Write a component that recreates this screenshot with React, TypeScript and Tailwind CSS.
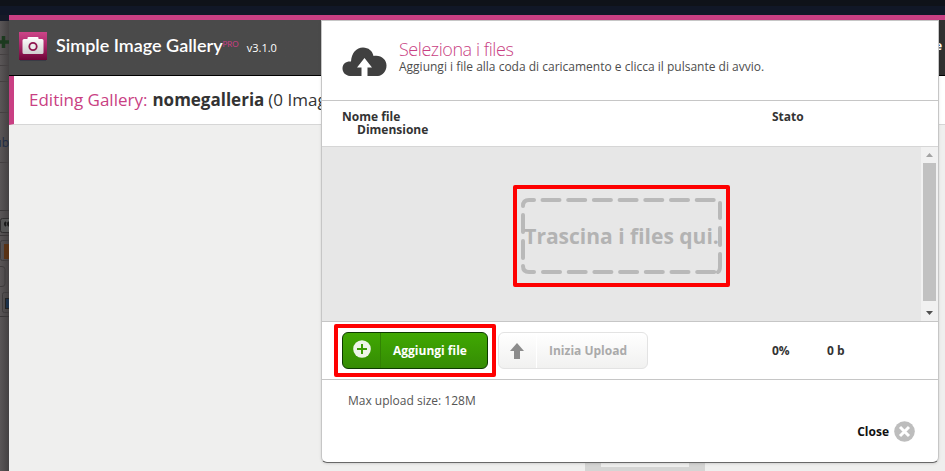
import type { ReactNode } from "react";

const LogoIcon = () => (
  <svg className="h-[30px] w-7 shrink-0" viewBox="0 0 28 30" aria-hidden="true">
    <defs>
      <linearGradient id="logo-bg" x1="0" y1="0" x2="0" y2="1">
        <stop offset="0" stopColor="#cc4588" />
        <stop offset="0.5" stopColor="#a82567" />
        <stop offset="1" stopColor="#6e0537" />
      </linearGradient>
      <linearGradient id="logo-camera" x1="0" y1="0" x2="0" y2="1">
        <stop offset="0" stopColor="#ffffff" />
        <stop offset="1" stopColor="#cfcfcf" />
      </linearGradient>
    </defs>
    <path d="M1 28.500h26" stroke="#393b45" />
    <rect width="28" height="28" fill="url(#logo-bg)" />
    <path
      d="M5 7h3.500V6a1 1 0 0 1 1-1h9a1 1 0 0 1 1 1v1H23a1.500 1.500 0 0 1 1.500 1.500V20.500A1.500 1.500 0 0 1 23 22H5a1.500 1.500 0 0 1-1.500-1.500V8.500A1.500 1.500 0 0 1 5 7z"
      fill="url(#logo-camera)"
    />
    <circle cx="14" cy="14.500" r="3.700" fill="#ececec" stroke="#8f1650" strokeWidth="1.800" />
  </svg>
);

const CloudUploadIcon = () => (
  <svg className="h-[29px] w-[45px] shrink-0" viewBox="0 0 45 29" aria-hidden="true">
    <path
      d="M8 29C3 28.500 0.500 25 0.500 21.500c0-5 4-7.500 8.500-7C9.500 6 14.500 0.500 21 0.500c5.500 0 9.500 3.500 10.500 8.500C39 7.500 44.500 12.500 44.500 18.500c0 6-4 10-8.500 10.500H25.500V20.500H30L22.500 11 15 20.500h4.500V29z"
      fill="#404040"
    />
  </svg>
);

const PlusIcon = () => (
  <svg className="size-[18px]" viewBox="0 0 18 18" aria-hidden="true">
    <circle cx="9" cy="9" r="8.800" fill="#eef5ea" />
    <path d="M9 4v10M4 9h10" stroke="#3c9d05" strokeWidth="2" />
  </svg>
);

const ArrowUpIcon = () => (
  <svg className="h-4 w-[14px]" viewBox="0 0 14 16" aria-hidden="true">
    <path d="M7 0l7 8h-4v8H4V8H0z" fill="#8c8c8c" />
  </svg>
);

const CloseIcon = () => (
  <svg className="size-[21px]" viewBox="0 0 21 21" aria-hidden="true">
    <circle cx="10.500" cy="10.500" r="10.300" fill="#bdbdbd" />
    <path d="M6 6l9 9M15 6l-9 9" stroke="#fff" strokeWidth="3" />
  </svg>
);

// Red frame used to point at a part of the dialog
const Highlight = ({ inset, children }: { inset: string; children: ReactNode }) => (
  <div className="relative">
    {children}
    <div className={`pointer-events-none absolute rounded-xs border-4 border-[#fe0000] ${inset}`} />
  </div>
);

const DimmedPage = () => (
  <div className="w-[9px] shrink-0 overflow-hidden bg-linear-to-r from-[#5a5657] to-[#444142]">
    <div className="h-1.5 bg-[#161a28]" />
    <svg className="mt-[15px] h-3 w-[9px]" viewBox="0 0 9 12" aria-hidden="true">
      <path d="M3.500 0v12M0 6h9" stroke="#1c3a1f" strokeWidth="3.500" />
    </svg>
    <div className="mt-1.5 h-3 border-y border-[#444041]" />
    <div className="h-4 border-b border-[#444041]" />
    <div className="h-[31px] border-b border-[#444041]" />
    <div className="mt-5 flex h-[30px] justify-end border-b border-[#444041] text-xs leading-5 text-[#1f2c45]">
      ub
    </div>
    <div className="h-12 border-b border-[#3a3738]" />
    <svg className="mt-1 h-[106px] w-[9px]" viewBox="0 0 9 106" aria-hidden="true">
      <rect x="0.500" y="3.500" width="14" height="14" rx="2" fill="#555" stroke="#302e2f" />
      <path d="M6 7q-2 2 0 4M9 7q-2 2 0 4" stroke="#191919" strokeWidth="2" fill="none" />
      <path d="M0 20.500h9" stroke="#3a3738" />
      <rect x="0.500" y="25.500" width="18" height="20" rx="2" fill="none" stroke="#3f3c3d" />
      <rect x="4" y="29" width="10" height="15" fill="#593214" />
      <path d="M0 51.500h2a3 3 0 0 1 3 3v14a3 3 0 0 1-3 3H0" fill="none" stroke="#3f3c3d" />
      <rect x="2.500" y="77.500" width="18" height="20" rx="2" fill="none" stroke="#3f3c3d" />
      <rect x="5.500" y="83.500" width="12" height="10" fill="#1c3048" stroke="#222" />
      <path d="M0 101.500h9" stroke="#3a3738" />
    </svg>
  </div>
);

const UploadDialog = () => (
  <div
    role="dialog"
    aria-label="Seleziona i files"
    className="absolute top-5 right-[6px] left-[321px] rounded-b-md border border-[#c6c6c6] border-b-[#686868] bg-white text-xs text-[#333] shadow-sm"
  >
    <div className="flex h-20 items-start gap-3 border-b border-[#c6c6c6] px-5 pt-[18px]">
      <div className="pt-2">
        <CloudUploadIcon />
      </div>
      <div>
        <h2 className="text-lg leading-5 font-light tracking-tight text-[#c93f83]">Seleziona i files</h2>
        <p className="leading-4 text-[#4d4d4d]">Aggiungi i file alla coda di caricamento e clicca il pulsante di avvio.</p>
      </div>
    </div>

    <div className="flex h-[45px] px-5 pt-[9px] leading-[13px] font-bold">
      <div className="w-[430px]">
        <div>Nome file</div>
        <div className="pl-[15px]">Dimensione</div>
      </div>
      <div>Stato</div>
    </div>

    <div className="flex h-[175px] border-t border-[#d6d6d6] bg-[#e7e7e7]">
      <div className="flex flex-1 items-center justify-center pt-1">
        <Highlight inset="-inset-x-2 -inset-y-[13px]">
          <div className="relative flex h-[76px] w-[201px] items-center justify-center">
            <svg className="absolute inset-0 h-full w-full" viewBox="0 0 201 76" aria-hidden="true">
              <g fill="none" stroke="#b9b9b9" strokeWidth="4" strokeLinecap="round">
                <path d="M2 8q0-6 6-6h5M2 68q0 6 6 6h5" />
                <path d="M21.500 2H198M22 74H196" strokeDasharray="17 8.700" />
                <path d="M2 17v17M2 43v17M199 5v15M199 30v17M199 56v12q0 5-2 6" />
              </g>
            </svg>
            <p className="relative text-[21px] font-bold whitespace-nowrap text-[#b3b3b3]">Trascina i files qui.</p>
          </div>
        </Highlight>
      </div>
      <div className="flex w-[17px] flex-col items-center justify-between bg-[#f1f1f1] py-1.5">
        <svg className="h-1 w-[7px]" viewBox="0 0 7 4" aria-hidden="true">
          <path d="M0 4l3.500-4L7 4z" fill="#a3a3a3" />
        </svg>
        <div className="mt-1.5 mb-2.5 w-[13px] flex-1 bg-[#c1c1c1]" />
        <svg className="h-1 w-[7px]" viewBox="0 0 7 4" aria-hidden="true">
          <path d="M0 0l3.500 4L7 0z" fill="#505050" />
        </svg>
      </div>
    </div>

    <div className="flex h-[59px] items-center border-y border-[#c6c6c6] px-5 font-bold">
      <Highlight inset="-inset-2">
        <button
          type="button"
          className="flex h-[37px] w-[146px] rounded-md border border-[#0c3a00] bg-linear-to-b from-[#40a802] to-[#358c04] text-white"
        >
          <span className="flex h-full w-[38px] items-center justify-center border-r border-[#318203] pb-1">
            <PlusIcon />
          </span>
          <span className="flex h-full flex-1 items-center pl-3">Aggiungi file</span>
        </button>
      </Highlight>
      <button
        type="button"
        disabled
        className="ml-2.5 flex h-[37px] w-[150px] rounded-md border border-[#e3e3e3] bg-linear-to-b from-white to-[#f1f1f0] text-[#aaa]"
      >
        <span className="flex h-full w-[38px] items-center justify-center border-r border-white pr-0.5">
          <ArrowUpIcon />
        </span>
        <span className="flex h-full flex-1 items-center pl-3">Inizia Upload</span>
      </button>
      <span className="ml-[124px] w-[55px]">0%</span>
      <span>0 b</span>
    </div>

    <div className="px-[26px] pt-3 pb-5">
      <p className="leading-[18px] text-[#555]">Max upload size: 128M</p>
      <div className="flex justify-end pt-[11px]">
        <button type="button" className="-mr-[3px] flex items-center gap-[5px] font-bold text-[#111]">
          Close
          <CloseIcon />
        </button>
      </div>
    </div>
  </div>
);

const App = () => {
  return (
    <div className="relative flex min-h-screen flex-col overflow-hidden bg-[#efefee] font-['Open_Sans',sans-serif]">
      <div className="h-1.5 bg-[#0f1219]" />
      <div className="h-[9px] bg-[#111727]" />

      <div className="flex flex-1">
        <DimmedPage />
        <div className="flex min-w-0 flex-1 flex-col">
          <header className="flex h-[61px] items-start justify-between border-t-5 border-b border-t-[#c93f83] border-b-black bg-linear-to-r from-[#4a4a4a] from-35% to-[#303030] pl-[10px] text-white">
            <div className="flex pt-3">
              <LogoIcon />
              <h1 className="ml-[9px] font-['Lato',sans-serif] text-lg leading-[26px] font-semibold">
                Simple Image Gallery
              </h1>
              <span className="pt-1 font-['Lato',sans-serif] text-[8px] leading-4 text-[#c93f83]">PRO</span>
              <span className="ml-2 pt-2 text-[11px] leading-4">v3.1.0</span>
            </div>
            <button type="button" className="pt-[18px] pr-[3px] text-xs leading-4 font-bold">
              Close
            </button>
          </header>
          <div className="flex h-[49px] items-center border-b border-l-5 border-b-[#d6d6d6] border-l-[#c93f83] bg-white pl-[15px] text-[17px] whitespace-nowrap text-[#333]">
            <span className="text-[#c93f83]">Editing Gallery:</span>
            <strong className="ml-[5px]">nomegalleria</strong>
            <span className="ml-1">(0 Images)</span>
          </div>
          <main className="flex flex-1 items-end pl-[576px]">
            <div className="h-5 w-[120px] border-x-16 border-b-4 border-[#d5d5d4]" />
          </main>
        </div>
      </div>

      <UploadDialog />
    </div>
  );
};

export default App;
